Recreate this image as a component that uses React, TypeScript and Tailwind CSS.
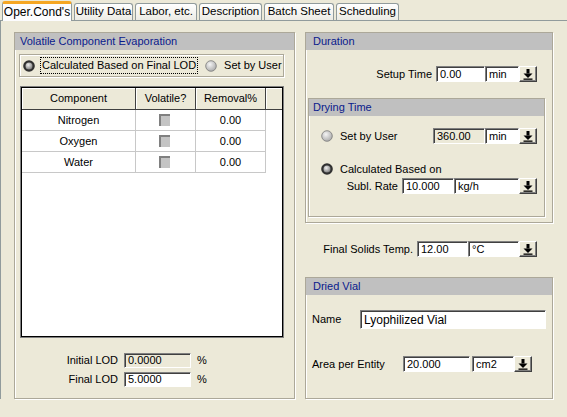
import React from 'react';

const TABS: { label: string; w: string }[] = [
  { label: "Oper.Cond's", w: 'w-[70px]' },
  { label: 'Utility Data', w: 'w-[59px]' },
  { label: 'Labor, etc.', w: 'w-[62px]' },
  { label: 'Description', w: 'w-[63px]' },
  { label: 'Batch Sheet', w: 'w-[70px]' },
  { label: 'Scheduling', w: 'w-[63px]' },
];

const ROWS = ['Nitrogen', 'Oxygen', 'Water'];

const etched = 'border border-[#ACA899] shadow-[inset_1px_1px_0_#fff,1px_1px_0_#fff]';
const sunken = 'border border-[#808080] border-r-white border-b-white shadow-[inset_1px_1px_0_#404040]';

function Radio({ on }: { on?: boolean }) {
  return (
    <svg width="12" height="12" viewBox="0 0 12 12" className="shrink-0">
      <defs>
        <radialGradient id="rOff" cx="0.4" cy="0.35" r="0.7">
          <stop offset="0" stopColor="#F4F4F4" />
          <stop offset="1" stopColor="#A8A8A8" />
        </radialGradient>
        <radialGradient id="rOn" cx="0.4" cy="0.35" r="0.7">
          <stop offset="0" stopColor="#F0F0F0" />
          <stop offset="1" stopColor="#7A7A7A" />
        </radialGradient>
      </defs>
      {on ? (
        <>
          <circle cx="6" cy="6" r="5.8" fill="#303030" />
          <circle cx="6" cy="6" r="3.5" fill="url(#rOn)" />
        </>
      ) : (
        <circle cx="6" cy="6" r="5.3" fill="url(#rOff)" stroke="#7A7A7A" strokeWidth="0.8" />
      )}
    </svg>
  );
}

function Field({ value, className, disabled }: { value: string; className: string; disabled?: boolean }) {
  return (
    <div
      className={`flex shrink-0 items-center whitespace-nowrap pl-[3px] leading-none ${disabled ? 'bg-[#ECE9D8]' : 'bg-white'} ${sunken} ${className}`}
    >
      {value}
    </div>
  );
}

function DropBtn() {
  return (
    <div className="flex h-[16px] w-[18px] shrink-0 items-center justify-center border border-white border-r-[#404040] border-b-[#404040] bg-[#ECE9D8] shadow-[inset_-1px_-1px_0_#808080]">
      <svg width="10" height="11" viewBox="0 0 10 11">
        <rect x="3.5" y="0" width="3" height="4.5" fill="#000" />
        <polygon points="0.5,4.5 9.5,4.5 5,9" fill="#000" />
        <rect x="0.5" y="9.5" width="9" height="1.3" fill="#000" />
      </svg>
    </div>
  );
}

function Header({ title, pad }: { title: string; pad: string }) {
  return <div className={`h-[17px] bg-[#C0C0C0] leading-[17px] text-[#0A1A8C] ${pad}`}>{title}</div>;
}

export default function App() {
  return (
    <div className="h-[417px] w-[567px] overflow-hidden bg-[#ECE9D8] font-['Liberation_Sans',Arial,sans-serif] text-[11px] text-black">
      {/* tab strip */}
      <div className="flex h-[20px] items-end gap-[2px] pl-[2px]">
        {TABS.map((t, i) =>
          i === 0 ? (
            <div
              key={t.label}
              className={`relative z-10 mb-[-1px] flex h-[20px] ${t.w} items-center justify-center whitespace-nowrap rounded-t-[3px] border-x border-t-[3px] border-x-[#919B9C] border-t-[#F5A623] bg-[#FCFCFE] pb-[1px] text-[12px]`}
            >
              {t.label}
            </div>
          ) : (
            <div
              key={t.label}
              className={`flex h-[17px] ${t.w} items-center justify-center whitespace-nowrap rounded-t-[3px] border-x border-t border-[#919B9C] bg-gradient-to-b from-white to-[#ECEBE4] text-[11.5px]`}
            >
              {t.label}
            </div>
          ),
        )}
      </div>

      {/* page */}
      <div className="flex gap-[10px] border-t border-l border-[#919B9C] pt-[11px] pl-[13px]">
        {/* left group */}
        <div className={`flex h-[367px] w-[281px] flex-col ${etched}`}>
          <Header title="Volatile Component Evaporation" pad="pl-[5px]" />

          <div className={`mt-[4px] ml-[4px] flex h-[23px] w-[265px] items-center ${etched}`}>
            <div className="ml-[3px]">
              <Radio on />
            </div>
            <div className="ml-[5px] flex h-[17px] items-center border border-dotted border-black px-[1px]">
              Calculated Based on Final LOD
            </div>
            <div className="ml-[7px]">
              <Radio />
            </div>
            <span className="ml-[7px]">Set by User</span>
          </div>

          {/* grid */}
          <div className="mt-[9px] ml-[5px] h-[252px] w-[264px] border border-[#808080] bg-white p-[1px] shadow-[inset_1px_1px_0_#000,inset_-1px_-1px_0_#000]">
            <div className="flex h-[22px] bg-[#ECE9D8]">
              <div className="flex w-[114px] items-center justify-center border-r border-b border-[#404040] shadow-[inset_1px_1px_0_#fff]">
                Component
              </div>
              <div className="flex w-[60px] items-center justify-center border-r border-b border-[#404040] shadow-[inset_1px_1px_0_#fff]">
                Volatile?
              </div>
              <div className="flex w-[70px] items-center justify-center border-r border-b border-[#404040] shadow-[inset_1px_1px_0_#fff]">
                Removal%
              </div>
              <div className="flex-1 border-b border-[#404040] shadow-[inset_1px_1px_0_#fff]" />
            </div>
            {ROWS.map((r) => (
              <div key={r} className="flex h-[21px]">
                <div className="flex w-[114px] items-center justify-center border-r border-b border-[#C8C8C8]">{r}</div>
                <div className="flex w-[60px] items-center justify-center border-r border-b border-[#C8C8C8]">
                  <div className="mr-[2px] h-[12px] w-[11px] border-t-2 border-l-2 border-[#808080] bg-[#C4C4C4]" />
                </div>
                <div className="flex w-[70px] items-center justify-center border-r border-b border-[#C8C8C8]">0.00</div>
              </div>
            ))}
          </div>

          <div className="mt-[15px] flex h-[15px] items-center">
            <span className="w-[103px] text-right">Initial LOD</span>
            <Field value="0.0000" disabled className="ml-[6px] h-[15px] w-[67px]" />
            <span className="ml-[6px]">%</span>
          </div>
          <div className="mt-[4px] flex h-[15px] items-center">
            <span className="w-[103px] text-right">Final LOD</span>
            <Field value="5.0000" className="ml-[6px] h-[15px] w-[67px]" />
            <span className="ml-[6px]">%</span>
          </div>
        </div>

        {/* right column */}
        <div className="flex w-[248px] flex-col">
          <div className={`flex h-[191px] flex-col ${etched}`}>
            <Header title="Duration" pad="pl-[7px]" />
            <div className="mt-[16px] flex h-[16px] items-center justify-end pr-[15px]">
              <span className="mr-[4px]">Setup Time</span>
              <Field value="0.00" className="h-[16px] w-[49px]" />
              <Field value="min" className="h-[16px] w-[34px]" />
              <DropBtn />
            </div>

            <div className={`mt-[16px] ml-[2px] flex h-[119px] w-[237px] flex-col ${etched}`}>
              <Header title="Drying Time" pad="pl-[4px]" />
              <div className="mt-[12px] flex h-[16px] items-center pr-[7px]">
                <div className="ml-[12px]">
                  <Radio />
                </div>
                <span className="ml-[7px]">Set by User</span>
                <div className="ml-auto flex">
                  <Field value="360.00" disabled className="h-[16px] w-[52px]" />
                  <Field value="min" className="h-[16px] w-[34px]" />
                  <DropBtn />
                </div>
              </div>
              <div className="mt-[17px] flex h-[16px] items-center">
                <div className="ml-[12px]">
                  <Radio on />
                </div>
                <span className="ml-[7px]">Calculated Based on</span>
              </div>
              <div className="mt-[1px] flex h-[16px] items-center justify-end pr-[7px]">
                <span className="mr-[4px]">Subl. Rate</span>
                <Field value="10.000" className="h-[16px] w-[52px]" />
                <Field value="kg/h" className="h-[16px] w-[65px]" />
                <DropBtn />
              </div>
            </div>
          </div>

          <div className="mt-[18px] flex h-[16px] items-center justify-end pr-[16px]">
            <span className="mr-[4px]">Final Solids Temp.</span>
            <Field value="12.00" className="h-[16px] w-[51px]" />
            <Field value="°C" className="h-[16px] w-[51px]" />
            <DropBtn />
          </div>

          <div className={`mt-[20px] flex h-[122px] flex-col ${etched}`}>
            <Header title="Dried Vial" pad="pl-[7px]" />
            <div className="mt-[15px] flex h-[19px] items-center">
              <span className="ml-[6px] w-[48px]">Name</span>
              <Field value="Lyophilized Vial" className="h-[19px] w-[186px] text-[12px]" />
            </div>
            <div className="mt-[27px] flex h-[16px] items-center">
              <span className="ml-[6px] w-[91px]">Area per Entity</span>
              <Field value="20.000" className="h-[16px] w-[67px]" />
              <Field value="cm2" className="ml-[2px] h-[16px] w-[42px]" />
              <DropBtn />
            </div>
          </div>
        </div>
      </div>
    </div>
  );
}
